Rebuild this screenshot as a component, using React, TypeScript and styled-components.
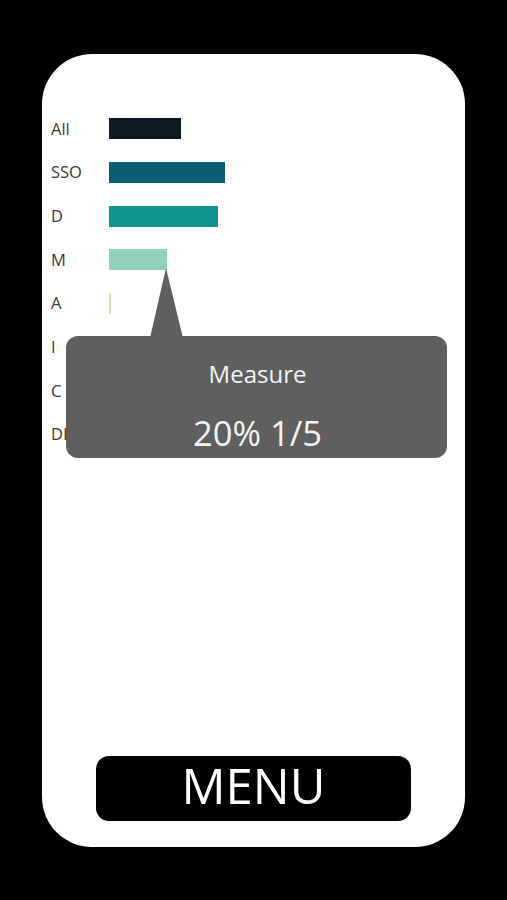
import React from "react";
import styled, { createGlobalStyle } from "styled-components";

const Global = createGlobalStyle`
  html, body { margin: 0; padding: 0; background: #000; }
  body { font-family: "Open Sans", "Noto Sans", sans-serif; }
`;

const Page = styled.div`
  width: 507px;
  height: 900px;
  background: #000;
  padding: 54px 42px 53px 42px;
  box-sizing: border-box;
`;

const Phone = styled.div`
  position: relative;
  height: 100%;
  background: #fff;
  border-radius: 50px;
  display: flex;
  flex-direction: column;
  padding: 53px 0 26px 9px;
  box-sizing: border-box;
`;

const Chart = styled.div`
  display: flex;
  flex-direction: column;
`;

const Row = styled.div`
  display: grid;
  grid-template-columns: 58px 1fr;
  align-items: center;
  height: 43.7px;
`;

const Label = styled.span`
  font-size: 16.5px;
  color: #3a3a3a;
  line-height: 1;
`;

const Bar = styled.div<{ $color: string }>`
  height: 21px;
  background: ${(p) => p.$color};
`;

const Spacer = styled.div`
  flex: 1;
`;

const MenuButton = styled.button`
  align-self: center;
  margin-left: -9px;
  width: 315px;
  height: 65px;
  border: none;
  border-radius: 13px;
  background: #000;
  color: #fff;
  font-family: "Open Sans", "Noto Sans", sans-serif;
  font-size: 49px;
  line-height: 1;
  padding: 0 0 6px 0;
  cursor: pointer;
`;

const Tooltip = styled.div`
  position: absolute;
  left: 24px;
  top: 282px;
  width: 381px;
  height: 122px;
  background: #5f5f5f;
  border-radius: 12px;
  color: #f2f2f2;
  display: flex;
  flex-direction: column;
  align-items: center;
  box-sizing: border-box;
  padding-top: 22px;
`;

const Pointer = styled.svg`
  position: absolute;
  left: 84px;
  top: -68px;
`;

const TipTitle = styled.div`
  font-size: 24px;
  line-height: 32px;
  margin-left: 2px;
`;

const TipValue = styled.div`
  font-size: 34.5px;
  line-height: 42px;
  margin-top: 22px;
  margin-left: 2px;
`;

const rows = [
  { label: "All", w: 72, color: "#0b1a24" },
  { label: "SSO", w: 116, color: "#0b5d72" },
  { label: "D", w: 109, color: "#139390" },
  { label: "M", w: 58, color: "#93d2ba" },
  { label: "A", w: 2, color: "#f0d9a6" },
  { label: "I", w: 0, color: "transparent" },
  { label: "C", w: 0, color: "transparent" },
  { label: "DI", w: 0, color: "transparent" },
];

export default function App() {
  return (
    <>
      <Global />
      <Page>
        <Phone>
          <Chart>
            {rows.map((r) => (
              <Row key={r.label}>
                <Label>{r.label}</Label>
                <div>
                  <Bar $color={r.color} style={{ width: r.w }} />
                </div>
              </Row>
            ))}
          </Chart>
          <Spacer />
          <MenuButton>MENU</MenuButton>
          <Tooltip>
            <Pointer width="34" height="70" viewBox="0 0 34 70">
              <polygon points="16,0 0,70 33,70" fill="#5f5f5f" />
            </Pointer>
            <TipTitle>Measure</TipTitle>
            <TipValue>20% 1/5</TipValue>
          </Tooltip>
        </Phone>
      </Page>
    </>
  );
}
